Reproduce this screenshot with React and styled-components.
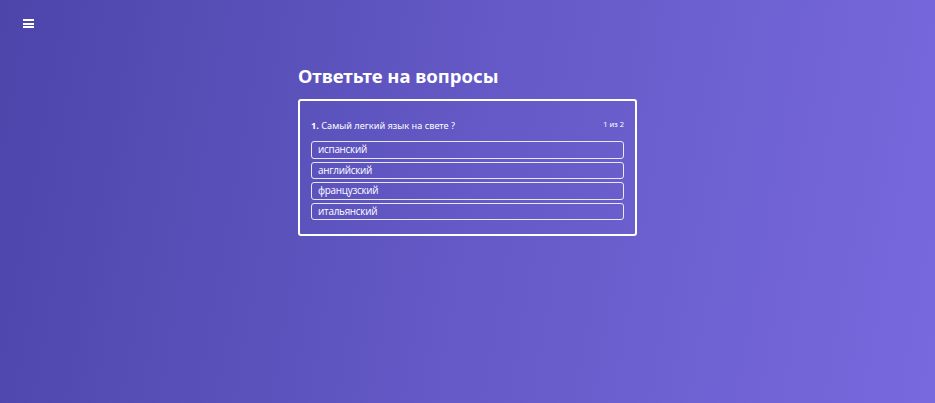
import React from 'react';
import styled, { createGlobalStyle } from 'styled-components';

const GlobalStyle = createGlobalStyle`
  html, body {
    margin: 0;
    padding: 0;
    height: 100%;
  }
  body {
    font-family: "Noto Sans", "Open Sans", sans-serif;
    color: #fff;
  }
`;

const Page = styled.div`
  min-height: 403px;
  background: linear-gradient(100deg, #4d45aa 0%, #6459c6 50%, #7869de 100%);
  position: relative;
  display: flex;
  justify-content: center;
`;

const MenuButton = styled.button`
  position: absolute;
  top: 19px;
  left: 23px;
  width: 11px;
  padding: 0;
  border: none;
  background: none;
  display: flex;
  flex-direction: column;
  gap: 1.5px;
  cursor: pointer;
  span {
    display: block;
    height: 2px;
    width: 11px;
    background: #fff;
  }
`;

const Main = styled.main`
  width: 339px;
  padding-top: 63px;
`;

const Title = styled.h1`
  margin: 0 0 10px;
  font-size: 18.5px;
  font-weight: 700;
  line-height: 26px;
`;

const Card = styled.section`
  border: 2px solid #fff;
  border-radius: 3px;
  padding: 17px 11px 14px;
`;

const Header = styled.div`
  display: flex;
  justify-content: space-between;
  align-items: center;
  margin-bottom: 7px;
`;

const Question = styled.p`
  margin: 0;
  font-size: 9.2px;
  line-height: 16px;
  b {
    font-weight: 700;
  }
`;

const Counter = styled.span`
  font-size: 7.5px;
  margin-top: -4px;
`;

const Options = styled.div`
  display: flex;
  flex-direction: column;
  gap: 3px;
`;

const Option = styled.button`
  font-family: "Open Sans", "Noto Sans", sans-serif;
  text-align: left;
  color: #fff;
  background: transparent;
  border: 1px solid rgba(255, 255, 255, 0.85);
  border-radius: 3px;
  height: 17.5px;
  padding: 0 6px;
  font-size: 9.9px;
  font-weight: 500;
  letter-spacing: -0.25px;
  line-height: 15px;
  cursor: pointer;
`;

const options = ['испанский', 'английский', 'французский', 'итальянский'];

export default function App() {
  return (
    <>
      <GlobalStyle />
      <Page>
        <MenuButton aria-label="menu">
          <span />
          <span />
          <span />
        </MenuButton>
        <Main>
          <Title>Ответьте на вопросы</Title>
          <Card>
            <Header>
              <Question>
                <b>1.</b> Самый легкий язык на свете ?
              </Question>
              <Counter>1 из 2</Counter>
            </Header>
            <Options>
              {options.map((o) => (
                <Option key={o}>{o}</Option>
              ))}
            </Options>
          </Card>
        </Main>
      </Page>
    </>
  );
}
